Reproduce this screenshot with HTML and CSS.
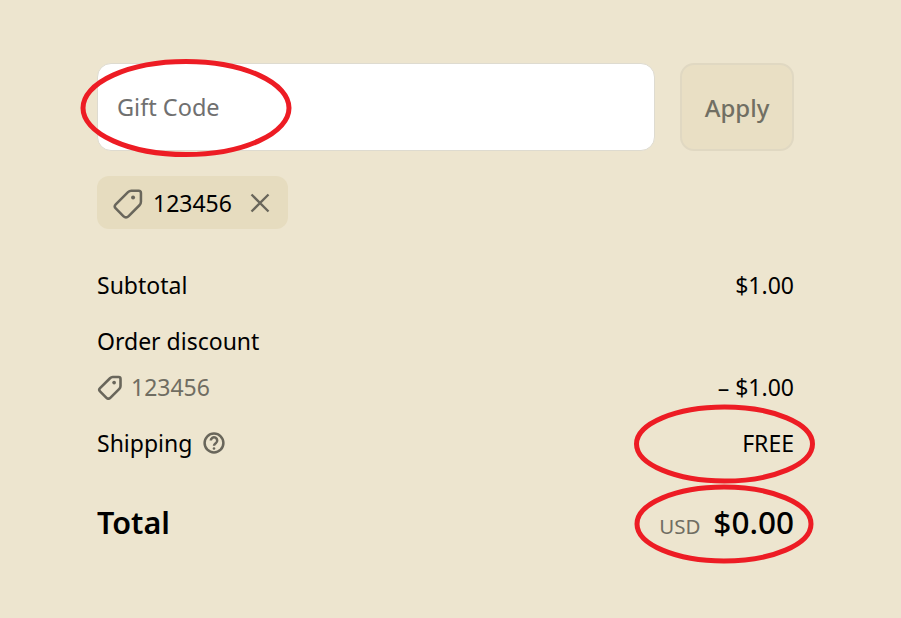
FILE: index.html
```html
<!DOCTYPE html>
<html lang="en">
<head>
<meta charset="utf-8">
<title>Order summary</title>
<link rel="stylesheet" href="styles.css">
</head>
<body>
<main class="summary">
  <form class="code-form">
    <input class="code-input" type="text" placeholder="Gift Code">
    <button class="apply" type="button">Apply</button>
  </form>
  <div class="chip">
    <svg class="tag tag-lg" viewBox="0 0 24 24"><path d="M14.500 2.800H20a1.700 1.700 0 0 1 1.700 1.700V11Q21.700 12.600 20.600 13.700L12.500 21.800Q10.500 23.800 8.500 21.800L2.800 16.100Q1.300 14.600 2.800 13.100L12 3.900Q13.100 2.800 14.500 2.800Z"/><circle class="dot" cx="15.800" cy="7.900" r="1.500"/></svg>
    <span class="chip-text">123456</span>
    <svg class="close" viewBox="0 0 20 20"><path d="M1.500 1.500l17 17M18.500 1.500l-17 17"/></svg>
  </div>
  <div class="rows">
    <div class="row"><span>Subtotal</span><span>$1.00</span></div>
    <div class="row"><span>Order discount</span></div>
    <div class="row row-code">
      <span class="code-label">
        <svg class="tag tag-sm" viewBox="0 0 24 24"><path d="M14.500 2.800H20a1.700 1.700 0 0 1 1.700 1.700V11Q21.700 12.600 20.600 13.700L12.500 21.800Q10.500 23.800 8.500 21.800L2.800 16.100Q1.300 14.600 2.800 13.100L12 3.900Q13.100 2.800 14.500 2.800Z"/><circle class="dot" cx="15.800" cy="7.900" r="1.700"/></svg>
        <span class="muted">123456</span>
      </span>
      <span>– $1.00</span>
    </div>
    <div class="row">
      <span class="ship-label">Shipping
        <svg class="help" viewBox="0 0 22 22"><circle cx="11" cy="11" r="9.400"/><path d="M7.800 8.600a3.200 3.200 0 1 1 5 2.600c-1 .7-1.800 1.200-1.800 2.500"/><circle class="dot" cx="11" cy="16.500" r="1.300"/></svg>
      </span>
      <span>FREE</span>
    </div>
    <div class="row row-total">
      <span class="total-label">Total</span>
      <span class="total-value"><span class="currency">USD</span><span class="amount">$0.00</span></span>
    </div>
  </div>
</main>
<svg class="marks" viewBox="0 0 901 618" aria-hidden="true">
  <ellipse cx="186" cy="108" rx="103" ry="46.500"/>
  <ellipse cx="724.500" cy="444" rx="88" ry="37"/>
  <ellipse cx="724" cy="524" rx="87" ry="37"/>
</svg>
</body>
</html>
```
FILE: styles.css
```css
* { box-sizing: border-box; }
html, body { margin: 0; height: 100%; }
body {
  background: #ede5cf;
  color: #000;
  font-family: "Noto Sans", "Open Sans", sans-serif;
  font-size: 23px;
  overflow: hidden;
  position: relative;
}
.summary { padding: 63px 107px 0 97px; }
.code-form { display: flex; gap: 25px; height: 88px; }
.code-input {
  flex: 1;
  min-width: 0;
  border: 1px solid #dedbd0;
  border-radius: 14px;
  background: #fff;
  padding: 0 19px;
  font: inherit;
  font-size: 23.500px;
  outline: none;
}
.code-input::placeholder { color: #707070; opacity: 1; }
.apply {
  width: 114px;
  border: 2px solid #e0d8c2;
  border-radius: 14px;
  background: #e9dfc4;
  color: #716f63;
  font: inherit;
  font-weight: 500;
  font-size: 24px;
  padding: 0;
}
.chip {
  display: inline-flex;
  align-items: center;
  height: 53px;
  width: 191px;
  margin-top: 25px;
  padding-left: 14px;
  background: #e6dcbf;
  border-radius: 12px;
  vertical-align: top;
}
.tag { fill: none; stroke: #69665b; stroke-width: 1.900; flex: none; }
.tag .dot, .help .dot { fill: #69665b; stroke: none; }
.tag-lg { width: 32px; height: 32px; margin-left: 1px; margin-right: -1px; }
.tag-sm { width: 26px; height: 26px; stroke-width: 2.400; }
.chip-text { margin-left: 10px; font-size: 23px; }
.close { width: 20px; height: 20px; margin-left: 18px; fill: none; stroke: #69665b; stroke-width: 2.300; }
.rows { display: flex; flex-direction: column; margin-top: 42px; }
.row {
  display: flex;
  justify-content: space-between;
  align-items: center;
  height: 28px;
  margin-bottom: 28px;
  line-height: 28px;
}
.row-code { margin-top: -10px; }
.code-label { display: flex; align-items: center; gap: 8px; }
.muted { color: #706d62; }
.ship-label { display: flex; align-items: center; gap: 11px; }
.help { width: 22px; height: 22px; fill: none; stroke: #69665b; stroke-width: 2.500; }
.row-total { margin-top: 23px; height: 40px; margin-bottom: 0; align-items: baseline; }
.total-label { font-size: 30.500px; font-weight: 600; }
.total-value { display: flex; align-items: baseline; gap: 13px; }
.currency { font-size: 20.500px; color: #706d62; }
.amount { font-size: 31.500px; font-weight: 500; }
.marks {
  position: absolute;
  inset: 0;
  width: 901px;
  height: 618px;
  pointer-events: none;
}
.marks ellipse { fill: none; stroke: #ed1c24; stroke-width: 5; }
```
